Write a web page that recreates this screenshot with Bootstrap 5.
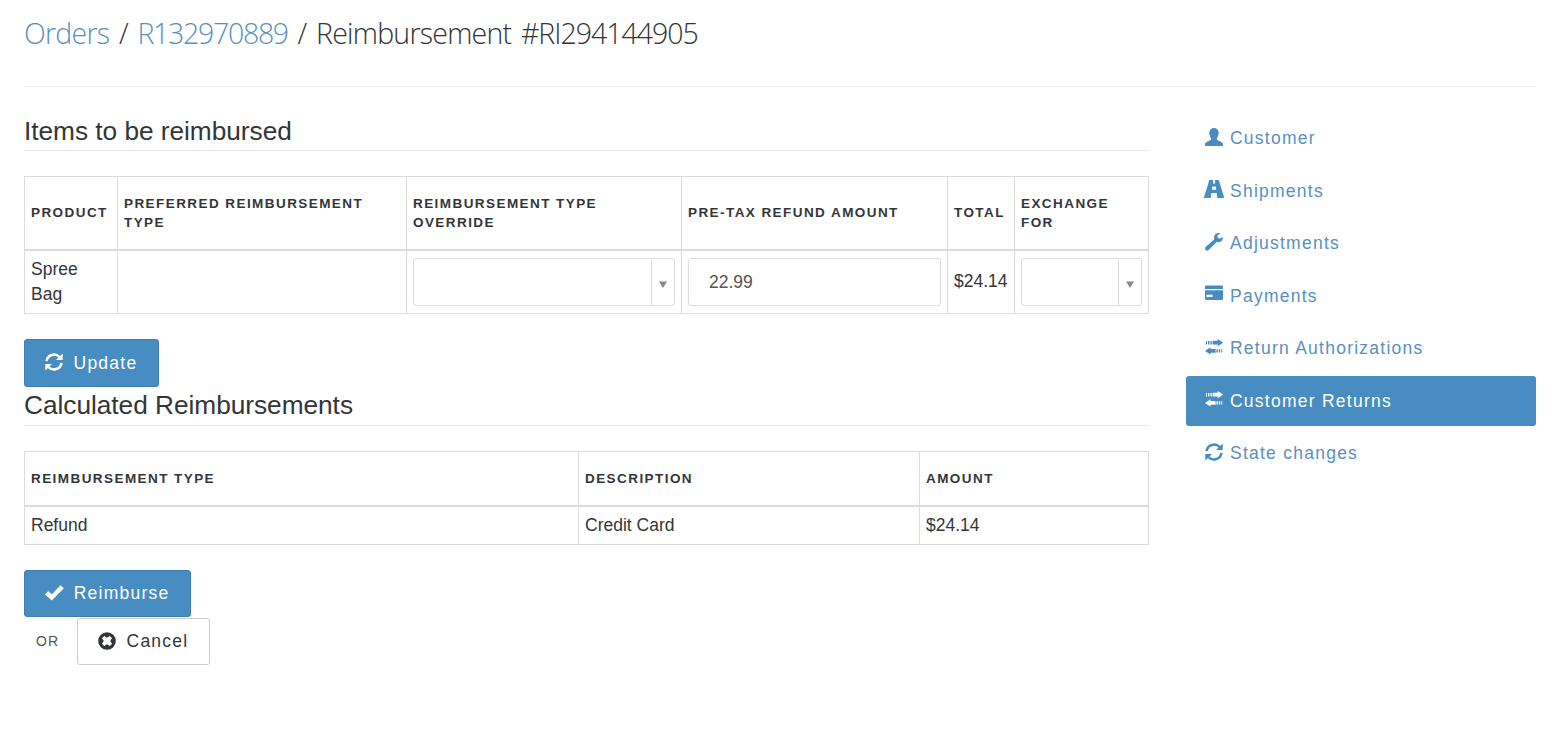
<!DOCTYPE html>
<html lang="en">
<head>
<meta charset="utf-8">
<meta name="viewport" content="width=device-width, initial-scale=1">
<title>Reimbursement #RI294144905</title>
<link href="https://cdn.jsdelivr.net/npm/bootstrap@5.3.0/dist/css/bootstrap.min.css" rel="stylesheet">
<style>
  :root { --brand: #478dc1; --line: #dcdcdc; --ink: #333638; }
  body { font-family: "Liberation Sans", Arial, sans-serif; font-size: 17.5px; line-height: 25px; color: var(--ink); background: #fff; }
  a { color: #5a8fbf; text-decoration: none; }
  .page { padding: 0 19px 0 24px; }
  .page-head { height: 87px; border-bottom: 1px solid #eee; padding-top: 13px; }
  .page-head h1 { font-family: "Open Sans", sans-serif; font-weight: 300; font-size: 28.5px; line-height: 40px; letter-spacing: -.77px; word-spacing: 3px; margin: 0; white-space: nowrap; color: #333; }
  .page-head .order-no { letter-spacing: -1.3px; }
  .page-head .reimb-no { letter-spacing: -1px; }
  .main-col { width: 1125px; flex: none; padding-top: 29px; }
  .side-col { width: 350px; flex: none; padding-top: 26.5px; }
  .legend-line { font-size: 26.25px; line-height: 30px; height: 35px; margin: 0 0 25px; border-bottom: 1px solid #e5e5e5; font-weight: 400; color: var(--ink); letter-spacing: -.03px; }
  .calc-legend { height: 36px; margin-top: 3px; }
  .data-grid { table-layout: fixed; width: 1125px; border-collapse: separate; border-spacing: 0; border-left: 1px solid var(--line); border-top: 1px solid var(--line); margin: 0 0 25px; }
  .data-grid th, .data-grid td { border-right: 1px solid var(--line); border-bottom: 1px solid var(--line); padding: 0 6px; vertical-align: middle; }
  .data-grid th { border-bottom-width: 2px; padding-bottom: 1px; font-size: 13.5px; line-height: 19px; letter-spacing: 1.43px; text-transform: uppercase; font-weight: 700; white-space: nowrap; }
  .items-grid th { height: 74px; } .items-grid td { height: 63px; }
  .items-grid td.total-cell { padding-bottom: 2px; }
  .calc-grid th { height: 55px; } .calc-grid td { height: 38px; }
  .field { height: 48px; border: 1px solid var(--line); border-radius: 3px; background: #fff; }
  .field input { font-size: 17.5px; color: #555; padding: 0 20px; background: none; box-shadow: none !important; }
  .drop-arrow { width: 23px; margin-top: 1px; border-left: 1px solid var(--line); padding-top: 4px; padding-right: 1px; color: #888; }
  .btn { --bs-btn-border-radius: 3px; --bs-btn-font-size: 17.5px; --bs-btn-line-height: 25px; --bs-btn-padding-x: 20px; --bs-btn-padding-y: 0; letter-spacing: 1.25px; height: 47px; display: inline-flex; align-items: center; }
  .btn-brand { --bs-btn-bg: #478dc1; --bs-btn-color: #fff; --bs-btn-border-color: #3e7dac; --bs-btn-hover-bg: #3b7caf; --bs-btn-hover-color: #fff; }
  .btn-plain { --bs-btn-bg: #fff; --bs-btn-color: #333638; --bs-btn-border-color: #ccc; --bs-btn-hover-bg: #eee; width: 133px; }
  .btn-update { height: 48px; width: 135px; }
  .btn-reimburse { width: 167px; }
  .btn svg { margin-right: 10.5px; margin-bottom: 2px; }
  .btn-reimburse svg { margin-right: 9.7px; }
  .or-word { width: 53px; padding-left: 12px; font-size: 14px; letter-spacing: 1.2px; color: #555; }
  .cancel-row { margin-top: 1px; }
  .side-nav { gap: 2.5px; }
  .side-nav .nav-link { height: 50px; padding: 0 18.7px; letter-spacing: 1.25px; color: #5a8fbf; display: flex; align-items: center; border-radius: 3px; }
  .side-nav .nav-link.active { color: #fff; background: var(--brand); }
  .side-nav .ico { width: 25.3px; margin-bottom: 3.6px; color: var(--brand); display: flex; }
  .side-nav .active .ico { color: #fff; }
  svg { fill: currentColor; overflow: visible; flex: none; display: block; }
</style>
</head>
<body>
<svg width="0" height="0" class="position-absolute" aria-hidden="true">
  <symbol id="refresh" viewBox="0 0 18 18">
    <path d="M1.500 8.200A7.600 7.600 0 0 1 14.600 4" fill="none" stroke="currentColor" stroke-width="2.500"/>
    <path d="M16.500 9.800A7.600 7.600 0 0 1 3.400 14" fill="none" stroke="currentColor" stroke-width="2.500"/>
    <path d="M17.700.4V7H11zM.3 17.600V11H7z"/>
  </symbol>
  <symbol id="transfer" viewBox="0 0 18 16">
    <path d="M1 2h1v3.400H1zM3 2h1.400v3.400H3zM5.400 2h1.400v3.400H5.400zM7.600 1.800H12.700V0L18.200 3.600l-5.500 3.600V5.500H7.600zM17.200 10.200h-1v3.400h1zM15.200 10.200h-1.400v3.400h1.400zM12.800 10.200h-1.400v3.400h1.400zM10.600 10H5.500V8.300L0 11.900l5.500 3.600v-1.800h5.100z"/>
  </symbol>
</svg>
<div class="page">
  <header class="page-head">
    <h1><a href="#">Orders</a> / <a href="#" class="order-no">R132970889</a> / Reimbursement <span class="reimb-no">#RI294144905</span></h1>
  </header>
  <div class="d-flex justify-content-between">
    <main class="main-col">
      <h2 class="legend-line">Items to be reimbursed</h2>
      <table class="data-grid items-grid">
        <colgroup><col style="width:93px"><col style="width:289px"><col style="width:275px"><col style="width:266px"><col style="width:67px"><col style="width:134px"></colgroup>
        <thead><tr><th>Product</th><th>Preferred Reimbursement<br>Type</th><th>Reimbursement Type<br>Override</th><th>Pre-tax Refund Amount</th><th>Total</th><th>Exchange<br>For</th></tr></thead>
        <tbody><tr>
          <td>Spree<br>Bag</td><td></td>
          <td><div class="field d-flex justify-content-end"><span class="drop-arrow d-flex align-items-center justify-content-center"><svg width="8" height="7"><path d="M0 .5h8L4 7z"/></svg></span></div></td>
          <td><div class="field d-flex"><input class="form-control border-0" type="text" value="22.99" aria-label="Refund amount"></div></td>
          <td class="total-cell">$24.14</td>
          <td><div class="field d-flex justify-content-end"><span class="drop-arrow d-flex align-items-center justify-content-center"><svg width="8" height="7"><path d="M0 .5h8L4 7z"/></svg></span></div></td>
        </tr></tbody>
      </table>
      <div class="d-flex"><button class="btn btn-brand btn-update" type="button"><svg width="18" height="18"><use href="#refresh"/></svg>Update</button></div>
      <h2 class="legend-line calc-legend">Calculated Reimbursements</h2>
      <table class="data-grid calc-grid">
        <colgroup><col style="width:554px"><col style="width:341px"><col style="width:229px"></colgroup>
        <thead><tr><th>Reimbursement Type</th><th>Description</th><th>Amount</th></tr></thead>
        <tbody><tr><td>Refund</td><td>Credit Card</td><td>$24.14</td></tr></tbody>
      </table>
      <div class="d-flex"><button class="btn btn-brand btn-reimburse" type="button"><svg width="19" height="16"><path d="M0 9.500 3.300 6 6.700 9.200 15.600.2l3.300 3.100L6.800 15.600z"/></svg>Reimburse</button></div>
      <div class="d-flex align-items-center cancel-row"><span class="or-word">OR</span><a class="btn btn-plain" href="#"><svg width="18" height="18"><path fill-rule="evenodd" d="M9 .2a8.800 8.800 0 1 0 0 17.600A8.800 8.800 0 0 0 9 .2zM6.200 4 9 5.800 11.800 4 14 6.200 12.200 9l1.800 2.800-2.200 2.200L9 12.200 6.200 14 4 11.800 5.800 9 4 6.200z"/></svg>Cancel</a></div>
    </main>
    <aside class="side-col">
      <nav class="nav nav-pills flex-column side-nav">
        <a class="nav-link" href="#"><span class="ico"><svg width="18" height="18"><path d="M9 0C6.400 0 4.300 1.800 4.300 4.500c0 1.800.4 3 1 4.200.5 1 .9 1.300.9 2.100 0 .9-.5 1.300-1.600 1.800L1.700 14C.6 14.600 0 15.500 0 16.600V18h18v-1.400c0-1.100-.6-2-1.700-2.600l-2.900-1.400c-1.100-.5-1.600-.9-1.600-1.800 0-.8.4-1.100.9-2.100.6-1.200 1-2.400 1-4.200C13.700 1.800 11.600 0 9 0z"/></svg></span>Customer</a>
        <a class="nav-link" href="#"><span class="ico"><svg width="18" height="18" viewBox="1.200 0 18 18"><path fill-rule="evenodd" d="M5.500 0h3.900l-.2 3.500h2.200l-.2-3.500h3.800l5.500 18h-6.900l-.6-5H7.500l-.6 5H0zM8.500 6.500l-.3 3.200h4.200l-.3-3.200z"/></svg></span>Shipments</a>
        <a class="nav-link" href="#"><span class="ico"><svg width="18" height="18"><path d="M15.500.4C12.700-.5 10.300.5 9.400 2.800c-.5 1.200-.5 2.400-.1 3.500L.7 14.100c-.9.8-.9 2 0 2.900s2.100.9 2.900 0L11.600 9c1.200.4 2.600.4 3.800-.2 1.900-.9 2.800-3 2.300-4.900L15.300 5.600 12.700 5l-.2-2.700z"/></svg></span>Adjustments</a>
        <a class="nav-link" href="#"><span class="ico"><svg width="18" height="18"><path fill-rule="evenodd" d="M0 1.500a1 1 0 0 1 1-1h16a1 1 0 0 1 1 1V4H0zM0 5.300h18v8.700a1 1 0 0 1-1 1H1a1 1 0 0 1-1-1zM1.500 9.800V12h6V9.800z"/></svg></span>Payments</a>
        <a class="nav-link" href="#"><span class="ico"><svg width="18" height="16"><use href="#transfer"/></svg></span>Return Authorizations</a>
        <a class="nav-link active" href="#"><span class="ico"><svg width="18" height="16"><use href="#transfer"/></svg></span>Customer Returns</a>
        <a class="nav-link" href="#"><span class="ico"><svg width="18" height="18"><use href="#refresh"/></svg></span>State changes</a>
      </nav>
    </aside>
  </div>
</div>
<script src="https://cdn.jsdelivr.net/npm/bootstrap@5.3.0/dist/js/bootstrap.bundle.min.js"></script>
</body>
</html>
